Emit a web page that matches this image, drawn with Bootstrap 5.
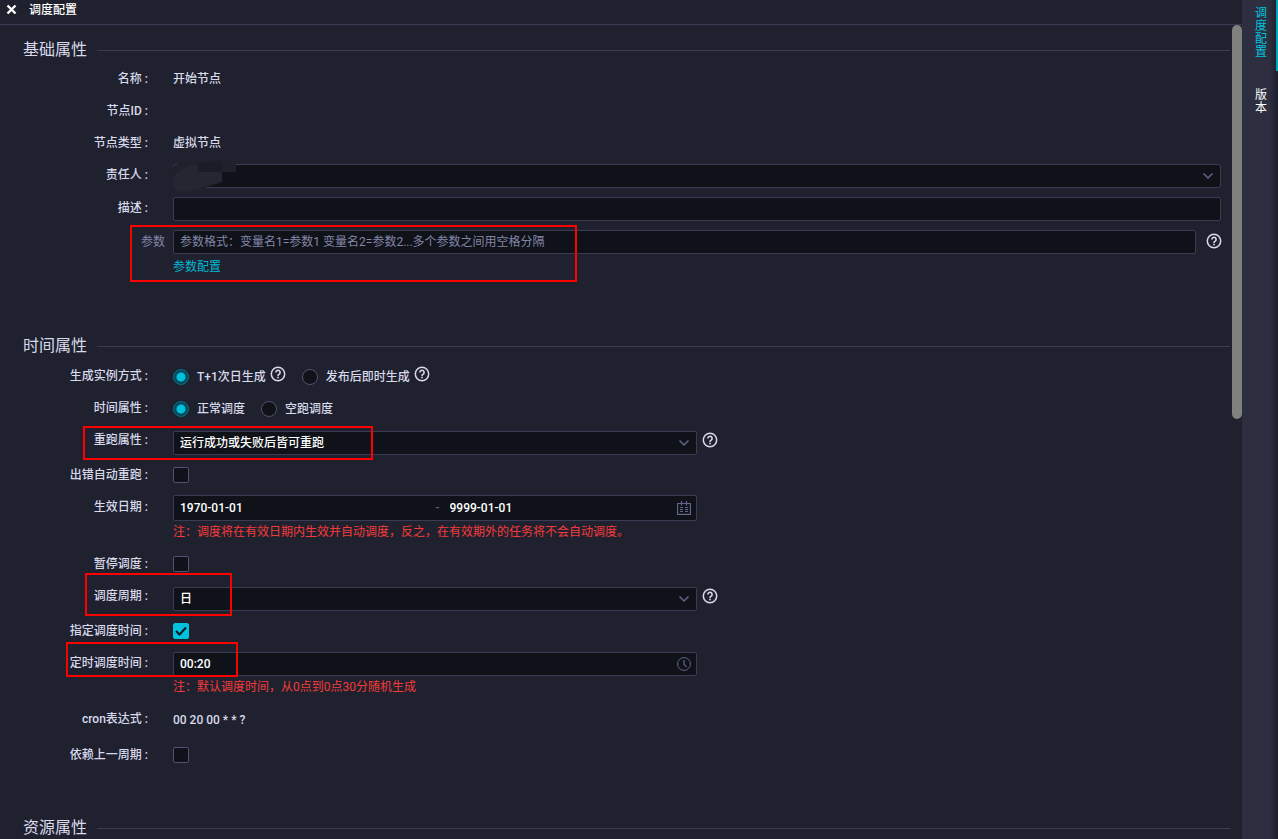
<!DOCTYPE html>
<html lang="zh-CN" data-bs-theme="dark">
<head>
<meta charset="utf-8">
<meta name="viewport" content="width=device-width, initial-scale=1">
<title>调度配置</title>
<link href="https://cdn.jsdelivr.net/npm/bootstrap@5.3.0/dist/css/bootstrap.min.css" rel="stylesheet">
<style>
  :root {
    --panel: #1f212e;
    --field: #0f1219;
    --line: #3b3c54;
    --ink: #d8d9ea;
    --muted: #8486a8;
    --accent: #00c1de;
  }
  body {
    background: var(--panel);
    color: var(--ink);
    font: 500 12px/24px Roboto, "Noto Sans CJK SC", sans-serif;
  }
  .panel-head { height: 25px; padding: 0 6px 5px; border-bottom: 1px solid var(--line); gap: 12px; }
  .panel-head h1 { font-size: 12px; line-height: 20px; font-weight: 500; color: #fff; }
  .close-btn { width: 11px; height: 20px; color: #fff; }
  .close-btn svg, .help svg, .box-icon svg { display: block; }

  .sect-title { padding: 0 2px 0 23px; gap: 10px; margin-bottom: 7px; }
  .sect-title h2 { font-size: 16px; line-height: 22px; padding-top: 2px; font-weight: 400; color: var(--ink); }
  .sect-title::after { content: ""; flex: 1; border-top: 1px solid var(--line); margin-top: 2px; }
  .sect-basic { padding-top: 12px; }
  .sect-basic .sect-title { margin-bottom: 6px; }
  .sect-time { padding-top: 55px; }
  .sect-res { padding-top: 48px; }

  .f-row { display: flex; align-items: flex-start; position: relative; min-height: 24px; margin-bottom: 8px; padding-right: 11px; }
  .f-name { width: 148px; margin-right: 25px; text-align: right; flex: none; }
  .f-name.dim { width: 165px; margin-right: 8px; color: var(--muted); font-weight: 400; }
  .f-body { flex: 1; min-width: 0; }
  .pad-3 { padding-top: 3px; }
  .pad-1 { padding-top: 1px; }
  .sect-basic .wide-field .f-body { padding-top: 1px; }
  .half { width: 50%; }
  .cron-row { min-height: 28px; }

  .box-field, .box-field:focus {
    height: 24px; min-height: 24px; padding: 0 6px;
    font-size: 12px; line-height: 22px; font-weight: 500; color: #fff;
    background-color: var(--field); border: 1px solid var(--line); border-radius: 2px; box-shadow: none;
  }
  .box-field::placeholder { color: var(--muted); font-weight: 400; opacity: 1; }
  select.box-field {
    background-image: url("data:image/svg+xml,%3Csvg xmlns='http://www.w3.org/2000/svg' viewBox='0 0 12 12'%3E%3Cpath d='M1.5 3.5 6 8l4.500-4.500' fill='none' stroke='%2362648a' stroke-width='1.500'/%3E%3C/svg%3E");
    background-position: right 6px center; background-size: 12px 12px;
  }
  .multi-box { padding-right: 5px; }
  .date-range { height: 26px; }
  .multi-box input { border: 0; background: none; padding: 0; color: #fff; font-weight: 500; outline: 0; min-width: 0; line-height: 22px; }
  .multi-box .dash { color: #62648a; width: 14px; flex: none; }
  .box-icon { color: #62648a; }
  .hint { color: #f53b3b; line-height: 22px; font-weight: 400; margin: 0 0 9px; }

  .help { width: 16px; height: 16px; color: var(--ink); flex: none; }
  .help.side { margin: 4px 0 0 5px; }
  .wide-field .help.side { margin-left: 10px; margin-right: -1px; }
  .radio-set { display: flex; padding-top: 1px; height: 24px; }
  .radio-set label { margin-left: 8px; }
  .radio-set .help { margin: 1px 0 0 4px; }
  .radio-set input { margin-left: 16px; }
  .radio-set input:first-child { margin-left: 0; }

  .form-check-input { width: 16px; height: 16px; margin: 4px 0 0; flex: none; display: block; background-color: var(--field); border: 1px solid #505271; box-shadow: none !important; }
  .form-check-input[type=checkbox] { margin-top: 4px; border-radius: 2px; }
  .form-check-input[type=radio]:checked { background: radial-gradient(circle, var(--accent) 4px, #054a5c 5px); border-color: #047386; }
  .form-check-input[type=checkbox]:checked {
    background-color: var(--accent); border-color: var(--accent);
    background-image: url("data:image/svg+xml,%3Csvg xmlns='http://www.w3.org/2000/svg' viewBox='0 0 14 14'%3E%3Cpath d='m2 7 3.500 3.500L12 3.500' fill='none' stroke='%23101820' stroke-width='2'/%3E%3C/svg%3E");
  }
  .cfg-link { display: block; width: max-content; line-height: 26px; margin-bottom: -2px; color: #00b8d4; text-decoration: none; font-weight: 400; }

  /* red frames laid over the settings that matter */
  .frame { position: absolute; border: 2px solid #f00; pointer-events: none; z-index: 2; }
  .frame-param { left: 130px; top: -4px; width: 447px; height: 57px; }
  .frame-rerun { left: 83px; top: -2px; width: 290px; height: 34px; }
  .frame-cycle { left: 85px; top: -11px; width: 147px; height: 43px; }
  .frame-timer { left: 66px; top: -9px; width: 172px; height: 35px; }
  .smudge { position: absolute; left: 168px; top: -3px; }

  .track { width: 10px; flex: none; }
  .thumb { height: 48.4%; border-radius: 5px; background: #808080; }
  .rail { width: 36px; flex: none; background: linear-gradient(to right, #2d2f41 27px, #1d1f2c 36px); }
  .rail button { width: 36px; border: 0; border-right: 2px solid transparent; background: none; color: #fff; padding: 7px 9px 12px 13px; line-height: 13px; font-weight: 400; }
  .rail button span { display: block; width: 12px; word-break: break-all; }
  .rail button.active { color: var(--accent); border-color: #00a5be; }
  .rail button + button { margin-top: 11px; }
</style>
</head>
<body class="vh-100 d-flex overflow-hidden">
<svg class="d-none" aria-hidden="true">
  <symbol id="q" viewBox="0 0 16 16">
    <circle cx="8" cy="8" r="6.700" fill="none" stroke="currentColor" stroke-width="1.500"/>
    <path d="M5.900 6.400a2.100 2.100 0 1 1 3.300 1.700C8.400 8.600 8 8.900 8 9.900" fill="none" stroke="currentColor" stroke-width="1.600"/>
    <rect x="7.200" y="10.700" width="1.600" height="1.600" fill="currentColor"/>
  </symbol>
</svg>

<main class="d-flex flex-column flex-grow-1 overflow-hidden">
  <header class="panel-head d-flex align-items-center flex-shrink-0">
    <button type="button" class="close-btn btn p-0 border-0 d-flex align-items-center" aria-label="关闭">
      <svg width="11" height="11" viewBox="0 0 11 11"><path d="M1.500 1.500l8 8M9.500 1.500l-8 8" stroke="currentColor" stroke-width="2.400"/></svg>
    </button>
    <h1 class="m-0">调度配置</h1>
  </header>

  <div class="d-flex flex-grow-1 overflow-hidden">
    <form class="flex-grow-1 overflow-hidden">
      <section class="sect-basic">
        <div class="sect-title d-flex align-items-center"><h2 class="m-0">基础属性</h2></div>
        <div class="f-row"><span class="f-name">名称 :</span><span>开始节点</span></div>
        <div class="f-row"><span class="f-name">节点ID :</span></div>
        <div class="f-row"><span class="f-name">节点类型 :</span><span>虚拟节点</span></div>
        <div class="f-row wide-field">
          <label class="f-name" for="owner">责任人 :</label>
          <div class="f-body"><select id="owner" class="form-select box-field"><option></option></select></div>
          <svg class="smudge" width="68" height="32" viewBox="0 0 68 32" aria-hidden="true">
            <path d="M0 13Q2 8 10 4L28 3 54 0v4h14v8H54v10L40 27Q28 31 12 31L4 28V18Z" fill="#1e202c"/>
            <path d="M5 17Q14 6 30 4v8h24v9L38 26Q28 31 12 31L5 28Z" fill="#242632"/>
            <path d="M30 4 54 1v11H30Z" fill="#1a1c27"/>
          </svg>
        </div>
        <div class="f-row wide-field">
          <label class="f-name" for="desc">描述 :</label>
          <div class="f-body"><input id="desc" type="text" class="form-control box-field"></div>
        </div>
        <div class="f-row wide-field mb-0">
          <label class="f-name dim pad-1" for="param">参数</label>
          <div class="f-body">
            <input id="param" type="text" class="form-control box-field" placeholder="参数格式：变量名1=参数1 变量名2=参数2...多个参数之间用空格分隔">
            <a class="cfg-link" href="#">参数配置</a>
          </div>
          <svg class="help side"><use href="#q"/></svg>
          <div class="frame frame-param"></div>
        </div>
      </section>

      <section class="sect-time">
        <div class="sect-title d-flex align-items-center"><h2 class="m-0">时间属性</h2></div>
        <div class="f-row">
          <span class="f-name">生成实例方式 :</span>
          <div class="radio-set">
            <input class="form-check-input" type="radio" name="gen" id="gen1" checked><label for="gen1">T+1次日生成</label>
            <svg class="help"><use href="#q"/></svg>
            <input class="form-check-input" type="radio" name="gen" id="gen2"><label for="gen2">发布后即时生成</label>
            <svg class="help"><use href="#q"/></svg>
          </div>
        </div>
        <div class="f-row">
          <span class="f-name">时间属性 :</span>
          <div class="radio-set">
            <input class="form-check-input" type="radio" name="mode" id="mode1" checked><label for="mode1">正常调度</label>
            <input class="form-check-input" type="radio" name="mode" id="mode2"><label for="mode2">空跑调度</label>
          </div>
        </div>
        <div class="f-row">
          <label class="f-name" for="rerun">重跑属性 :</label>
          <div class="f-body d-flex">
            <div class="half pad-3"><select id="rerun" class="form-select box-field"><option>运行成功或失败后皆可重跑</option></select></div>
            <svg class="help side"><use href="#q"/></svg>
          </div>
          <div class="frame frame-rerun"></div>
        </div>
        <div class="f-row">
          <label class="f-name" for="auto">出错自动重跑 :</label>
          <input class="form-check-input" type="checkbox" id="auto">
        </div>
        <div class="f-row mb-0">
          <label class="f-name" for="from">生效日期 :</label>
          <div class="f-body">
            <div class="box-field multi-box date-range half d-flex align-items-center">
              <input class="w-50 flex-shrink-0" id="from" type="text" value="1970-01-01">
              <span class="dash">-</span>
              <input class="flex-fill" type="text" value="9999-01-01" aria-label="结束日期">
              <span class="box-icon">
                <svg width="14" height="14" viewBox="0 0 14 14" fill="none" stroke="currentColor"><path d="M.6 2.500h12.800v10.900H.6zM4.500 0v4.500M9.500 0v4.500" stroke-width="1.200"/><path d="M3 6.500h3M8 6.500h3M3 8.500h3M8 8.500h3M3 10.500h3M8 10.500h3"/></svg>
              </span>
            </div>
            <p class="hint">注：调度将在有效日期内生效并自动调度，反之，在有效期外的任务将不会自动调度。</p>
          </div>
        </div>
        <div class="f-row">
          <label class="f-name" for="pause">暂停调度 :</label>
          <input class="form-check-input" type="checkbox" id="pause">
        </div>
        <div class="f-row">
          <label class="f-name" for="cycle">调度周期 :</label>
          <div class="f-body d-flex">
            <div class="half pad-3"><select id="cycle" class="form-select box-field"><option>日</option></select></div>
            <svg class="help side"><use href="#q"/></svg>
          </div>
          <div class="frame frame-cycle"></div>
        </div>
        <div class="f-row">
          <label class="f-name" for="fixed">指定调度时间 :</label>
          <input class="form-check-input" type="checkbox" id="fixed" checked>
        </div>
        <div class="f-row mb-0">
          <label class="f-name" for="timer">定时调度时间 :</label>
          <div class="f-body pad-1">
            <div class="box-field multi-box half d-flex align-items-center">
              <input class="flex-fill" id="timer" type="text" value="00:20">
              <span class="box-icon">
                <svg width="14" height="14" viewBox="0 0 14 14" fill="none" stroke="currentColor"><circle cx="7" cy="7" r="6.400"/><path d="M7 3v4.200l2.400 2.600" stroke-width="1.200"/></svg>
              </span>
            </div>
            <p class="hint">注：默认调度时间，从0点到0点30分随机生成</p>
          </div>
          <div class="frame frame-timer"></div>
        </div>
        <div class="f-row cron-row"><span class="f-name">cron表达式 :</span><span class="pad-1">00 20 00 * * ?</span></div>
        <div class="f-row mb-0">
          <label class="f-name" for="prev">依赖上一周期 :</label>
          <input class="form-check-input" type="checkbox" id="prev">
        </div>
      </section>

      <section class="sect-res">
        <div class="sect-title d-flex align-items-center"><h2 class="m-0">资源属性</h2></div>
      </section>
    </form>
    <div class="track"><div class="thumb"></div></div>
  </div>
</main>

<nav class="rail d-flex flex-column" aria-label="侧边">
  <button type="button" class="active"><span>调度配置</span></button>
  <button type="button"><span>版本</span></button>
</nav>
<script src="https://cdn.jsdelivr.net/npm/bootstrap@5.3.0/dist/js/bootstrap.bundle.min.js"></script>
</body>
</html>
